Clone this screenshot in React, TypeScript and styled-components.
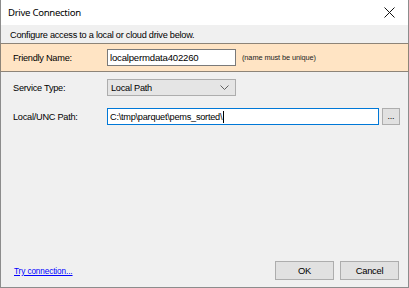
import * as React from "react";
import styled, { createGlobalStyle } from "styled-components";

const GlobalStyle = createGlobalStyle`
    html, body {
        margin: 0;
        padding: 0;
        background: #f0f0f0;
    }
    * {
        box-sizing: border-box;
    }
`;

const uiFont = `"Liberation Sans", Arial, sans-serif`;

export default function App() {
    return (
        <>
            <GlobalStyle />
            <Window>
                <TitleBar>
                    <Title>Drive Connection</Title>
                    <CloseButton aria-label="Close">
                        <svg width="11" height="11" viewBox="0 0 11 11">
                            <path d="M0.5 0.5 L10.5 10.5 M10.5 0.5 L0.5 10.5" stroke="#111" strokeWidth="1" fill="none" />
                        </svg>
                    </CloseButton>
                </TitleBar>
                <HeaderBar>Configure access to a local or cloud drive below.</HeaderBar>
                <Banner>
                    <Label>Friendly Name:</Label>
                    <TextBox value="localpermdata402260" readOnly width={129} />
                    <Hint>(name must be unique)</Hint>
                </Banner>
                <Form>
                    <Row>
                        <Label>Service Type:</Label>
                        <Combo>
                            <span>Local Path</span>
                            <svg width="9" height="5" viewBox="0 0 9 5">
                                <path d="M0.5 0.5 L4.5 4.5 L8.5 0.5" stroke="#606060" strokeWidth="1" fill="none" />
                            </svg>
                        </Combo>
                    </Row>
                    <Row>
                        <Label>Local/UNC Path:</Label>
                        <PathBox>
                            C:\tmp\parquet\pems_sorted\
                            <Caret />
                        </PathBox>
                        <BrowseButton>...</BrowseButton>
                    </Row>
                </Form>
                <Footer>
                    <TryLink href="#">Try connection...</TryLink>
                    <Buttons>
                        <DialogButton>OK</DialogButton>
                        <DialogButton>Cancel</DialogButton>
                    </Buttons>
                </Footer>
            </Window>
        </>
    );
}

const Window = styled.div`
    width: 409px;
    height: 288px;
    display: flex;
    flex-direction: column;
    background: #f0f0f0;
    border: 1px solid #8c8c8c;
    border-top: none;
    font-family: ${uiFont};
    font-size: 9.2px;
    letter-spacing: -0.25px;
    color: #000;
`;

const TitleBar = styled.div`
    height: 25px;
    background: #fff;
    display: flex;
    align-items: center;
    justify-content: space-between;
    padding: 0 0 1px 7px;
`;

const Title = styled.div`
    font-size: 9.6px;
    letter-spacing: -0.3px;
    font-family: "Noto Sans", ${uiFont};
`;

const CloseButton = styled.div`
    width: 34px;
    height: 24px;
    display: flex;
    align-items: center;
    justify-content: center;
    margin-right: 2px;
`;

const HeaderBar = styled.div`
    height: 18px;
    display: flex;
    align-items: center;
    padding: 1px 0 0 9px;
    background: #f0f0f0;
`;

const Banner = styled.div`
    height: 29px;
    display: flex;
    align-items: center;
    background: #ffe4c4;
    border: 1px solid #8d8478;
    margin: 0 -1px;
    padding-left: 12px;
`;

const Label = styled.div`
    width: 94px;
    flex-shrink: 0;
`;

const TextBox = styled.input<{ width: number }>`
    width: ${(p) => p.width}px;
    height: 17px;
    border: 1px solid #7a7a7a;
    background: #fff;
    font-family: ${uiFont};
    font-size: 9.6px;
    letter-spacing: -0.2px;
    padding: 0 2px;
    outline: none;
    color: #000;
`;

const Hint = styled.div`
    margin-left: 6px;
    font-size: 7.4px;
    letter-spacing: -0.1px;
    color: #222;
`;

const Form = styled.div`
    display: flex;
    flex-direction: column;
    gap: 12px;
    padding: 7px 0 0 12px;
`;

const Row = styled.div`
    display: flex;
    align-items: center;
`;

const Combo = styled.div`
    width: 129px;
    height: 17px;
    display: flex;
    align-items: center;
    justify-content: space-between;
    padding: 0 6px 0 3px;
    background: #e5e5e5;
    border: 1px solid #adadad;
`;

const PathBox = styled.div`
    width: 272px;
    height: 17px;
    display: flex;
    align-items: center;
    padding: 0 2px;
    background: #fff;
    border: 1px solid #0078d7;
`;

const Caret = styled.span`
    display: inline-block;
    width: 1px;
    height: 12px;
    background: #000;
    margin-left: 1px;
`;

const BrowseButton = styled.div`
    width: 18px;
    height: 17px;
    margin-left: 3px;
    display: flex;
    align-items: flex-end;
    justify-content: center;
    padding-bottom: 3px;
    background: #e1e1e1;
    border: 1px solid #adadad;
    font-size: 9px;
    line-height: 1;
`;

const Footer = styled.div`
    margin-top: auto;
    display: flex;
    align-items: flex-end;
    justify-content: space-between;
    padding: 0 9px 7px 13px;
`;

const TryLink = styled.a`
    color: #0000ff;
    font-size: 8.2px;
    letter-spacing: -0.1px;
    text-decoration: underline;
    margin-bottom: 4px;
`;

const Buttons = styled.div`
    display: flex;
    gap: 6px;
`;

const DialogButton = styled.div`
    width: 59px;
    height: 19px;
    display: flex;
    align-items: center;
    justify-content: center;
    background: #e1e1e1;
    border: 1px solid #adadad;
    font-size: 9.4px;
`;
